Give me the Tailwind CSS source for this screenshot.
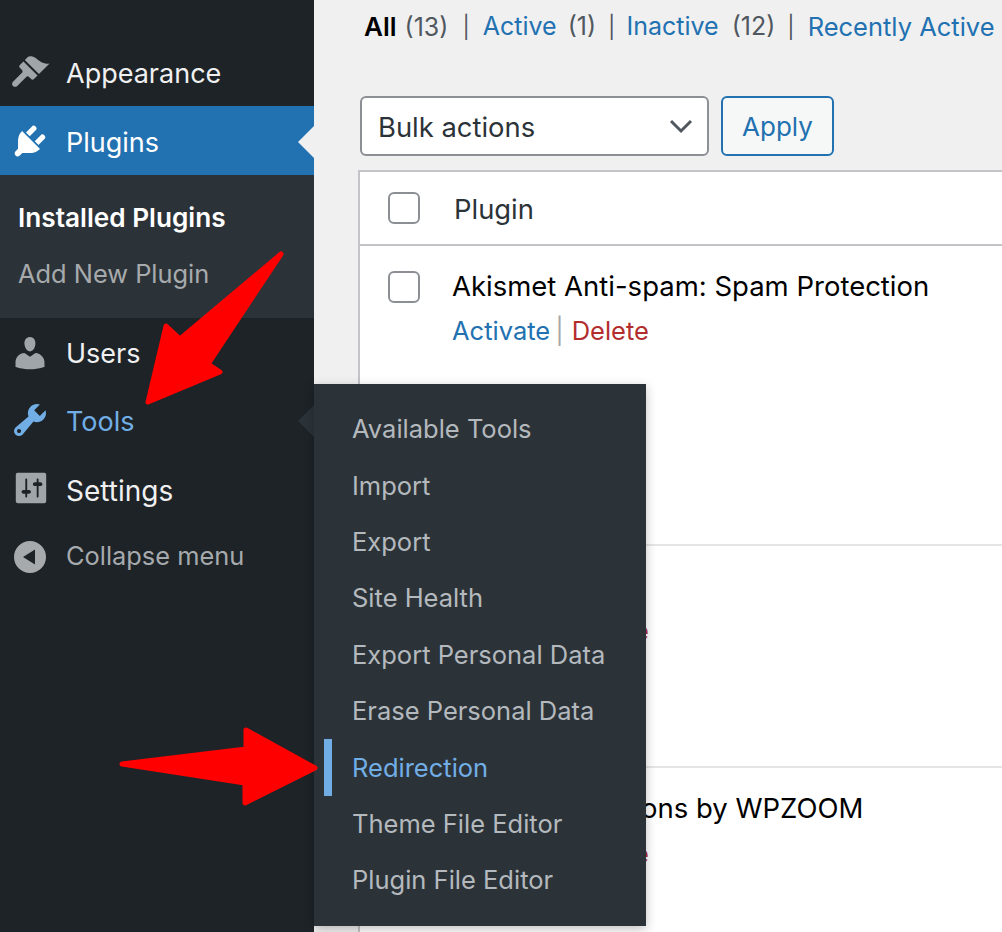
<!DOCTYPE html>
<html lang="en">
<head>
  <meta charset="UTF-8">
  <title>Plugins</title>
  <script src="https://cdn.jsdelivr.net/npm/@tailwindcss/browser@4"></script>
</head>
<body class="h-[932px] w-[1002px] overflow-hidden bg-[#f0f0f1] font-['Inter',sans-serif] text-[26px]">
  <div class="relative flex h-[932px] w-[1002px] overflow-hidden">

    <!-- Sidebar -->
    <aside class="w-[314px] shrink-0 bg-[#1d2327] pt-[38px] text-[27px] text-[#f0f0f1]">
      <a class="flex h-[68px] items-center">
        <svg class="ml-[10px] h-10 w-10 fill-[#a0a5aa]" viewBox="0 0 20 20"><path d="M14.48 11.06L7.41 3.99l1.5-1.5c.5-.56 2.3-.47 3.51.32 1.21.8 1.43 1.28 2.91 2.1 1.18.64 2.45 1.26 4.45.85zM13.77 11.77L6.7 4.7 4.93 6.47c-.39.39-.39 1.02 0 1.41l1.06 1.06c.39.39.39 1.02 0 1.41l-4.5 4.5c-.59.59-.59 1.54 0 2.12s1.53.59 2.12 0l4.5-4.5c.39-.39 1.02-.39 1.41 0l1.06 1.06c.39.39 1.02.39 1.41 0z"/></svg>
        <span class="ml-[16px] pt-[4px]">Appearance</span>
      </a>
      <a class="relative flex h-[69px] items-center bg-[#2271b1] text-white">
        <svg class="ml-[10px] h-10 w-10 fill-white" viewBox="0 0 20 20"><path d="M13.11 4.36L9.87 7.6 8 5.73l3.24-3.24c.35-.34 1.05-.2 1.56.32.52.51.66 1.21.31 1.55zm-8 1.77l.91-1.12 9.01 9.01-1.19.84c-.71.71-2.63 1.16-3.82 1.16H6.14L4.9 17.26c-.59.59-1.54.59-2.12 0-.59-.58-.59-1.53 0-2.12l1.24-1.24v-3.88c0-1.13.4-3.19 1.09-3.89zm7.26 3.97l3.24-3.24c.34-.35 1.04-.21 1.55.31.52.51.66 1.21.31 1.55l-3.24 3.25z"/></svg>
        <span class="ml-[16px] pt-[6px]">Plugins</span>
        <span class="absolute right-0 top-[20px] h-0 w-0 border-y-[16px] border-r-[16px] border-y-transparent border-r-[#f0f0f1]"></span>
      </a>
      <div class="bg-[#2c3338] pb-4 pt-[15px] text-[25.4px]">
        <a class="flex h-14 items-center pl-[18px] text-[26.2px] font-semibold text-white">Installed Plugins</a>
        <a class="flex h-14 items-center pl-[18px] text-[#a7aaad]">Add New Plugin</a>
      </div>
      <a class="flex h-[69px] items-center">
        <svg class="ml-[10px] h-10 w-10 fill-[#a0a5aa]" viewBox="0 0 20 20"><path d="M10 9.25c-2.27 0-2.73-3.44-2.73-3.44C7 4.02 7.82 2 9.97 2c2.16 0 2.98 2.02 2.71 3.81 0 0-.41 3.44-2.68 3.44zm0 2.57L12.72 10c2.39 0 4.52 2.33 4.52 4.53v2.49s-3.65 1.13-7.24 1.13c-3.65 0-7.24-1.13-7.24-1.13v-2.49c0-2.25 1.94-4.48 4.47-4.48z"/></svg>
        <span class="ml-[16px] pt-[3px]">Users</span>
      </a>
      <a class="relative flex h-[69px] items-center text-[#72aee6]">
        <svg class="mb-[3px] ml-[10px] h-10 w-10 fill-[#72aee6]" viewBox="0 0 20 20"><path d="M16.68 9.77c-1.34 1.34-3.3 1.67-4.95.99l-5.41 6.52c-.99.99-2.59.99-3.58 0s-.99-2.59 0-3.57l6.52-5.42c-.68-1.65-.35-3.61.99-4.95 1.28-1.28 3.12-1.62 4.72-1.06l-2.89 2.89 2.82 2.82 2.86-2.87c.53 1.58.18 3.39-1.08 4.65zM3.81 16.21c.4.39 1.04.39 1.43 0 .4-.4.4-1.04 0-1.43-.39-.4-1.03-.4-1.43 0-.39.39-.39 1.03 0 1.43z"/></svg>
        <span class="ml-[16px] pt-[2px]">Tools</span>
        <span class="absolute right-0 top-[18px] h-0 w-0 border-y-[16px] border-r-[16px] border-y-transparent border-r-[#2c3338]"></span>
      </a>
      <a class="flex h-[68px] items-center">
        <svg class="mb-[4px] ml-[12px] h-[38px] w-[38px] fill-[#a0a5aa]" viewBox="0 0 20 20"><path d="M18 17V3c0-.55-.45-1-1-1H3c-.55 0-1 .45-1 1v14c0 .55.45 1 1 1h14c.55 0 1-.45 1-1zM8 11h1c.55 0 1 .45 1 1s-.45 1-1 1H8v1.5c0 .28-.22.5-.5.5s-.5-.22-.5-.5V13H6c-.55 0-1-.45-1-1s.45-1 1-1h1V5.5c0-.28.22-.5.5-.5s.5.22.5.5V11zm5-2h-1c-.55 0-1-.45-1-1s.45-1 1-1h1V5.5c0-.28.22-.5.5-.5s.5.22.5.5V7h1c.55 0 1 .45 1 1s-.45 1-1 1h-1v5.5c0 .28-.22.5-.5.5s-.5-.22-.5-.5V9z"/></svg>
        <span class="ml-[16px] pt-[2px] text-[28px]">Settings</span>
      </a>
      <a class="flex h-[66px] items-center text-[#a7aaad]">
        <svg class="ml-[10px] h-10 w-10 fill-[#a7aaad]" viewBox="0 0 20 20"><path fill-rule="evenodd" d="M10 2a8 8 0 1 0 0 16 8 8 0 0 0 0-16zm2.5 4.25v7.5L6.5 10z"/></svg>
        <span class="ml-[16px] pb-[2px] text-[25.4px]">Collapse menu</span>
      </a>
    </aside>

    <!-- Main content -->
    <main class="min-w-0 flex-1 pl-11">
      <div class="flex h-[54px] items-center gap-[14px] whitespace-nowrap pl-[6px] text-[25px] text-[#50575e]">
        <span><b class="text-[26px] font-semibold text-black">All</b> <span class="ml-[1px]">(13)</span></span><span class="text-[22px]">|</span>
        <span class="-ml-[1px]"><a class="text-[#2271b1]">Active</a> <span class="ml-[4px]">(1)</span></span><span class="-ml-[2px] text-[22px]">|</span>
        <span class="-ml-[3px]"><a class="text-[#2271b1]">Inactive</a> <span class="ml-[6px]">(12)</span></span><span class="-ml-[2px] text-[22px]">|</span>
        <a class="-ml-[1px] text-[25.5px] text-[#2271b1]">Recently Active</a>
      </div>
      <div class="ml-[2px] mt-[42px] flex gap-3">
        <div class="flex h-[60px] w-[349px] items-center justify-between rounded-md border-2 border-[#8c8f94] bg-white pl-[16px] pr-[14px] text-[27.4px] text-[#2c3338]">
          <span class="pt-[4px]">Bulk actions</span>
          <svg class="h-6 w-6" viewBox="0 0 24 24" fill="none" stroke="#50575e" stroke-width="3"><path d="M2 7l10 10L22 7"/></svg>
        </div>
        <button class="h-[60px] w-[113px] rounded-md border-2 border-[#2271b1] bg-[#f6f7f7] text-[#2271b1]">Apply</button>
      </div>
      <div class="mt-[14px] w-[700px] border-l-2 border-t-2 border-[#c3c4c7] bg-white">
        <div class="flex h-[74px] items-center border-b-2 border-[#c3c4c7] pl-7">
          <span class="h-8 w-8 rounded-md border-2 border-[#8c8f94] bg-white"></span>
          <span class="ml-[34px] pt-[4px] text-[27.4px] text-[#2c3338]">Plugin</span>
        </div>
        <div class="flex h-[300px] border-b-2 border-[#e5e5e5] pl-7 pt-[24px]">
          <span class="mt-[1px] h-8 w-8 shrink-0 rounded-md border-2 border-[#8c8f94] bg-white"></span>
          <div class="ml-8">
            <div class="whitespace-nowrap text-[27.5px] leading-[32px] text-black">Akismet Anti-spam: Spam Protection</div>
            <div class="mt-[13px] flex gap-[5px] text-[25.5px] leading-[32px] text-[#2271b1]"><a>Activate</a><span class="text-[#a7aaad]">|</span><a class="ml-[3px] text-[#b32d2e]">Delete</a></div>
          </div>
        </div>
        <div class="flex h-[222px] border-b-2 border-[#e5e5e5] pl-[92px] pt-[24px]">
          <div>
            <div class="text-[27.5px] leading-[32px] text-black">Redirection</div>
            <div class="mt-[13px] flex gap-[5px] text-[25.5px] leading-[32px] text-[#2271b1]"><a>Activate</a><span class="text-[#a7aaad]">|</span><a class="ml-[3px] text-[#b32d2e]">Delete</a></div>
          </div>
        </div>
        <div class="h-[200px] pl-[92px] pt-[24px]">
          <div class="-ml-2 whitespace-nowrap text-[27.5px] leading-[32px] text-black">Social Media Icons by WPZOOM</div>
          <div class="mt-[14px] flex gap-[5px] text-[25.5px] leading-[32px] text-[#2271b1]"><a>Activate</a><span class="text-[#a7aaad]">|</span><a class="ml-[3px] text-[#b32d2e]">Delete</a></div>
        </div>
      </div>
    </main>

    <!-- Tools flyout -->
    <div class="absolute left-[314px] top-[384px] h-[542px] w-[332px] bg-[#2c3338] pt-[17px] text-[25.5px] text-[#b4b9be] shadow-[0_3px_10px_rgba(0,0,0,0.25)]">
      <a class="flex h-[56.4px] items-center pl-[38px]">Available Tools</a>
      <a class="flex h-[56.4px] items-center pl-[38px] pt-[2px]">Import</a>
      <a class="flex h-[56.4px] items-center pl-[38px]">Export</a>
      <a class="flex h-[56.4px] items-center pl-[38px]">Site Health</a>
      <a class="flex h-[56.4px] items-center pl-[38px]">Export Personal Data</a>
      <a class="flex h-[56.4px] items-center pl-[38px]">Erase Personal Data</a>
      <a class="relative flex h-[56.4px] items-center pl-[38px] pt-[2px] text-[#72aee6]"><span class="absolute left-[10px] top-0 h-[57px] w-2 bg-[#72aee6]"></span>Redirection</a>
      <a class="flex h-[56.4px] items-center pl-[38px]">Theme File Editor</a>
      <a class="flex h-[56.4px] items-center pl-[38px]">Plugin File Editor</a>
    </div>

    <!-- Red annotation arrows -->
    <svg class="pointer-events-none absolute left-0 top-0 h-[932px] w-[1002px]" viewBox="0 0 1002 932" fill="#ff0000" stroke="#ff0000" stroke-width="5" stroke-linejoin="round">
      <polygon points="281,254 208,364 220,372 148,402 166,326 180,339"/>
      <polygon points="122,764 246,749 246,730 315,768 245,803 245,783"/>
    </svg>
  </div>
</body>
</html>
